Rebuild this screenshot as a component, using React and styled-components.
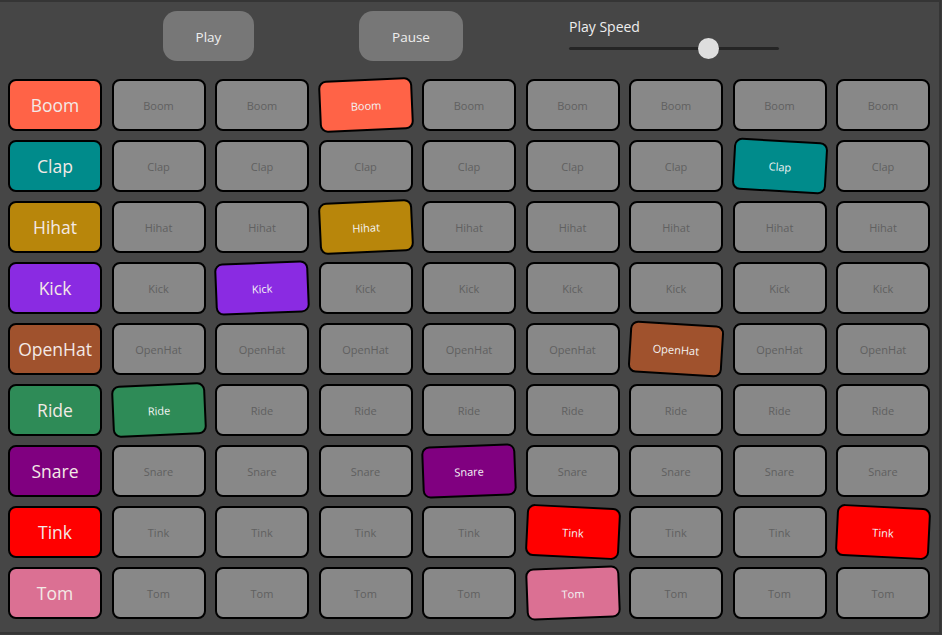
import { Fragment } from "react";
import styled, { createGlobalStyle } from "styled-components";

const GlobalStyle = createGlobalStyle`
  body {
    margin: 0;
    background: #3b3b3b;
    font-family: "Open Sans", "Noto Sans", sans-serif;
  }
`;

const instruments = [
  { name: "Boom", color: "#ff6347", step: 3, tilt: -2.5 },
  { name: "Clap", color: "#008b8b", step: 7, tilt: 3.2 },
  { name: "Hihat", color: "#b8860b", step: 3, tilt: -2.7 },
  { name: "Kick", color: "#8a2be2", step: 2, tilt: -2.3 },
  { name: "OpenHat", color: "#a0522d", step: 6, tilt: 3.5 },
  { name: "Ride", color: "#2e8b57", step: 1, tilt: -2.5 },
  { name: "Snare", color: "#800080", step: 4, tilt: -2.2 },
  { name: "Tink", color: "#ff0000", step: 5, tilt: 2.8, extra: 8 },
  { name: "Tom", color: "#db7093", step: 5, tilt: -2.2 },
];

const Page = styled.div`
  width: 941px;
  height: 634px;
  box-sizing: border-box;
  background: #464646;
  border-top: 2px solid #353535;
  border-right: 2px solid #353535;
  border-bottom: 2px solid #353535;
  padding: 9px 0 0 8px;
`;

const TopBar = styled.div`
  display: flex;
  align-items: flex-start;
  gap: 105px;
  padding-left: 155px;
  height: 68px;
`;

const ControlButton = styled.button`
  height: 50px;
  width: ${(p) => p.$width}px;
  border: none;
  border-radius: 14px;
  background: #777;
  color: #eee;
  font-family: inherit;
  font-size: 13.5px;
  padding-top: 2px;
  cursor: pointer;
`;

const SpeedControl = styled.div`
  display: flex;
  flex-direction: column;
  width: 210px;
  margin-left: 1px;
`;

const SpeedLabel = styled.label`
  color: #eee;
  font-size: 14px;
  line-height: 18px;
  margin-top: 7px;
`;

const SpeedSlider = styled.input`
  -webkit-appearance: none;
  appearance: none;
  width: 210px;
  height: 22px;
  margin: 1px 0 0 0;
  background: transparent;

  &::-webkit-slider-runnable-track {
    height: 3px;
    background: #252525;
    border-radius: 2px;
  }
  &::-webkit-slider-thumb {
    -webkit-appearance: none;
    width: 21px;
    height: 21px;
    border-radius: 50%;
    background: #dedede;
    margin-top: -9px;
    border: none;
  }
`;

const Grid = styled.div`
  display: grid;
  grid-template-columns: repeat(9, 94px);
  grid-auto-rows: 52px;
  column-gap: 9.5px;
  row-gap: 9px;
`;

const LabelPad = styled.div`
  display: flex;
  align-items: center;
  justify-content: center;
  box-sizing: border-box;
  border: 2px solid #000;
  border-radius: 8px;
  background: ${(p) => p.$color};
  color: #f3e9e6;
  font-size: 17.5px;
`;

const StepPad = styled.div`
  display: flex;
  align-items: center;
  justify-content: center;
  box-sizing: border-box;
  border: 2px solid #000;
  border-radius: 8px;
  background: ${(p) => (p.$active ? p.$color : "#888")};
  color: ${(p) => (p.$active ? "#f4f4f4" : "#606060")};
  font-size: 11px;
  transform: rotate(${(p) => (p.$active ? p.$tilt : 0)}deg);
`;

export default function App() {
  return (
    <Page>
      <GlobalStyle />
      <TopBar>
        <ControlButton $width={91}>Play</ControlButton>
        <ControlButton $width={104}>Pause</ControlButton>
        <SpeedControl>
          <SpeedLabel>Play Speed</SpeedLabel>
          <SpeedSlider type="range" min="0" max="100" defaultValue="68" />
        </SpeedControl>
      </TopBar>
      <Grid>
        {instruments.map((inst) => (
          <Fragment key={inst.name}>
            <LabelPad $color={inst.color}>{inst.name}</LabelPad>
            {Array.from({ length: 8 }, (_, i) => {
              const col = i + 1;
              const active = col === inst.step || col === inst.extra;
              return (
                <StepPad
                  key={col}
                  $active={active}
                  $color={inst.color}
                  $tilt={inst.tilt}
                >
                  {inst.name}
                </StepPad>
              );
            })}
          </Fragment>
        ))}
      </Grid>
    </Page>
  );
}
